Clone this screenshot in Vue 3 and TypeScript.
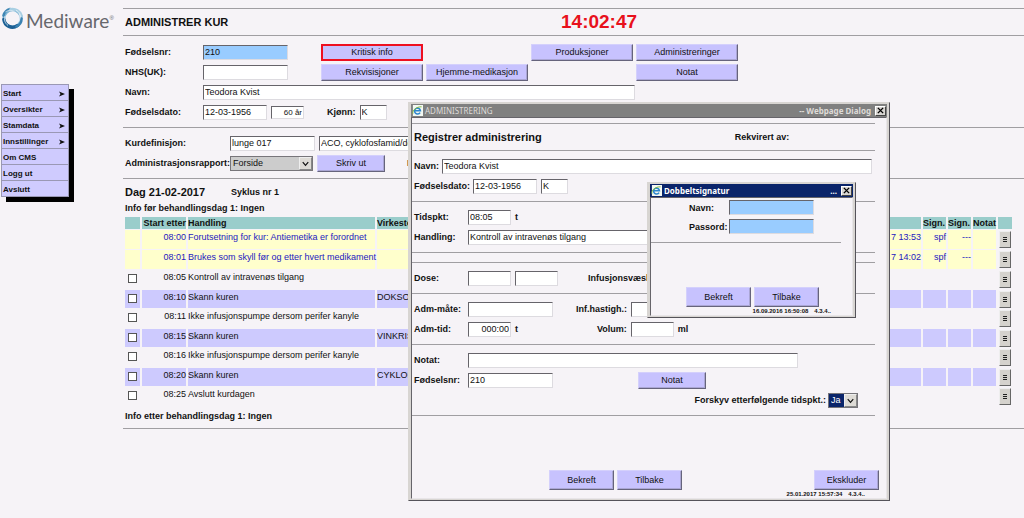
<script setup lang="ts">
import { ref } from 'vue'

interface MenuItem { label: string; sub: boolean }
interface Row {
  time: string
  action: string
  drug?: string
  date?: string
  sign?: string
  sign2?: string
  kind: 'done' | 'plain' | 'band'
}

const menu: MenuItem[] = [
  { label: 'Start', sub: true },
  { label: 'Oversikter', sub: true },
  { label: 'Stamdata', sub: true },
  { label: 'Innstillinger', sub: true },
  { label: 'Om CMS', sub: false },
  { label: 'Logg ut', sub: false },
  { label: 'Avslutt', sub: false },
]

const rows: Row[] = [
  { time: '08:00', action: 'Forutsetning for kur: Antiemetika er forordnet', date: '7 13:53', sign: 'spf', sign2: '---', kind: 'done' },
  { time: '08:01', action: 'Brukes som skyll før og etter hvert medikament', date: '7 14:02', sign: 'spf', sign2: '---', kind: 'done' },
  { time: '08:05', action: 'Kontroll av intravenøs tilgang', kind: 'plain' },
  { time: '08:10', action: 'Skann kuren', drug: 'DOKSO', kind: 'band' },
  { time: '08:11', action: 'Ikke infusjonspumpe dersom perifer kanyle', kind: 'plain' },
  { time: '08:15', action: 'Skann kuren', drug: 'VINKRIS', kind: 'band' },
  { time: '08:16', action: 'Ikke infusjonspumpe dersom perifer kanyle', kind: 'plain' },
  { time: '08:20', action: 'Skann kuren', drug: 'CYKLOF', kind: 'band' },
  { time: '08:25', action: 'Avslutt kurdagen', kind: 'plain' },
]

const birthNo = ref('210')
const nhs = ref('')
const name = ref('Teodora Kvist')
const birthDate = ref('12-03-1956')
const age = ref('60 år')
const gender = ref('K')
const cure = ref('lunge 017')
const cureText = ref('ACO, cyklofosfamid/doksorubicin')
const time = ref('08:05')
const action = ref('Kontroll av intravenøs tilgang')
const duration = ref('000:00')
</script>

<template>
  <div class="page">
    <aside class="side">
      <div class="logo">
        <svg class="ring" viewBox="0 0 24 24" aria-hidden="true">
          <g fill="none" stroke-linecap="round">
            <circle cx="12" cy="12" r="9" stroke="#7fb4d4" stroke-width="3" />
            <path d="M3 13a9 9 0 0 0 14 6.500" stroke="#1c5f94" stroke-width="3.500" />
            <path d="M2.500 9a10 10 0 0 1 7-7" stroke="#3f86b4" stroke-width="2.500" />
            <path d="M10 2.500c5-1 10 2 11.500 7" stroke="#a9cfe3" stroke-width="3" />
            <path d="M21.500 12c0 4-2 7-5.500 8.500" stroke="#3b82b2" stroke-width="2.500" />
            <path d="M5 5c3-2 7-2 9 0M19 7c1.500 3 1 7-1 9M7 19c-3-2-4-6-3-9M16 3.500c3 1.500 4.500 4 4.500 7" stroke="#e6f1f7" stroke-width="0.800" />
          </g>
        </svg>
        <span class="brand">Mediware</span><span class="reg">®</span>
      </div>
      <nav class="menu">
        <a v-for="m in menu" :key="m.label" href="#" class="menu-item">
          <span>{{ m.label }}</span>
          <svg v-if="m.sub" class="arrow" viewBox="0 0 6 6" aria-hidden="true"><path d="M0 0.500L6 3L0 5.500L1.500 3Z" fill="#111" /></svg>
        </a>
      </nav>
    </aside>

    <main class="main">
      <header class="title-row">
        <h1 class="heading title">ADMINISTRER KUR</h1>
        <span class="clock">14:02:47</span>
      </header>

      <section class="section patient">
        <div class="row">
          <label class="lab" for="m-nr">Fødselsnr:</label>
          <input id="m-nr" v-model="birthNo" class="field w-l blue">
          <div class="actions">
            <button class="btn alert">Kritisk info</button>
            <span></span>
            <button class="btn">Produksjoner</button>
            <button class="btn">Administreringer</button>
          </div>
        </div>
        <div class="row">
          <label class="lab" for="m-nhs">NHS(UK):</label>
          <input id="m-nhs" v-model="nhs" class="field w-l">
          <div class="actions">
            <button class="btn">Rekvisisjoner</button>
            <button class="btn">Hjemme-medikasjon</button>
            <span></span>
            <button class="btn">Notat</button>
          </div>
        </div>
        <div class="row">
          <label class="lab" for="m-navn">Navn:</label>
          <input id="m-navn" v-model="name" class="field w-name">
        </div>
        <div class="row">
          <label class="lab" for="m-dato">Fødselsdato:</label>
          <input id="m-dato" v-model="birthDate" class="field w-date">
          <input v-model="age" class="field w-age right" aria-label="Alder">
          <label class="lab-gender" for="m-kj">Kjønn:</label>
          <input id="m-kj" v-model="gender" class="field w-s">
        </div>
      </section>

      <section class="section">
        <div class="row">
          <label class="lab-wide" for="m-kur">Kurdefinisjon:</label>
          <input id="m-kur" v-model="cure" class="field w-l">
          <input v-model="cureText" class="field w-cure" aria-label="Kurbeskrivelse">
        </div>
        <div class="row">
          <label class="lab-wide" for="m-rap">Administrasjonsrapport:</label>
          <span class="pick pick-report">
            <select id="m-rap"><option>Forside</option></select>
            <svg viewBox="0 0 12 12" aria-hidden="true"><path d="M3 4.500L6 8L9 4.500" fill="none" stroke="#111" stroke-width="1.300" /></svg>
          </span>
          <button class="btn w-btn">Skriv ut</button>
          <span class="info-lab">I</span>
        </div>
      </section>

      <section class="section plan">
        <div class="day"><h2 class="heading">Dag 21-02-2017</h2><strong>Syklus nr 1</strong></div>
        <div class="info">Info før behandlingsdag 1: Ingen</div>
        <table class="table">
          <colgroup>
            <col class="c-check"><col class="c-time"><col class="c-action"><col><col class="c-date">
            <col class="c-sign"><col class="c-sign"><col class="c-sign"><col class="c-more">
          </colgroup>
          <thead>
            <tr><th></th><th class="right">Start etter</th><th>Handling</th><th>Virkesto</th><th></th><th>Sign.</th><th>Sign.</th><th>Notat</th><th></th></tr>
          </thead>
          <tbody>
            <tr v-for="r in rows" :key="r.time" :class="r.kind">
              <td><input v-if="r.kind !== 'done'" type="checkbox" class="check" :aria-label="r.time"></td>
              <td class="right">{{ r.time }}</td>
              <td>{{ r.action }}</td>
              <td>{{ r.drug }}</td>
              <td class="right">{{ r.date }}</td>
              <td class="right">{{ r.sign }}</td>
              <td class="right">{{ r.sign2 }}</td>
              <td></td>
              <td class="more-cell">
                <button class="more" :aria-label="'Meny ' + r.time">
                  <svg viewBox="0 0 6 7" aria-hidden="true"><path d="M1 1.500H5M1 3.500H5M1 5.500H5" stroke="#222" stroke-width="1" /></svg>
                </button>
              </td>
            </tr>
          </tbody>
        </table>
        <div class="info after">Info etter behandlingsdag 1: Ingen</div>
      </section>
      <div class="section"></div>
    </main>

    <div class="window admin" role="dialog" aria-label="Administrering">
      <div class="bar">
        <svg class="ie" viewBox="0 0 12 12" aria-hidden="true">
          <rect x="1" y="0" width="11" height="12" fill="#f4f8f2" />
          <path d="M8.800 8.200A3.200 3.200 0 1 1 9.200 6.300H3.500" fill="none" stroke="#2c86cf" stroke-width="1.700" />
          <path d="M1 9.500C0 6 5 1.500 10.500 2" fill="none" stroke="#7dbb3c" stroke-width="1" />
        </svg>
        <span class="bar-name">ADMINISTRERING</span>
        <strong>-- Webpage Dialog</strong>
        <button class="close" aria-label="Lukk"><svg viewBox="0 0 8 8" aria-hidden="true"><path d="M1 1L7 7M7 1L1 7" stroke="#000" stroke-width="1.600" /></svg></button>
      </div>
      <div class="body">
        <div class="title-row dialog-title">
          <h2 class="heading">Registrer administrering</h2>
          <strong class="req">Rekvirert av:</strong>
        </div>
        <section class="section">
          <div class="row">
            <label class="auto" for="d-navn">Navn:</label>
            <input id="d-navn" v-model="name" class="field grow">
          </div>
          <div class="row">
            <label class="auto" for="d-dato">Fødselsdato:</label>
            <input id="d-dato" v-model="birthDate" class="field w-date">
            <input v-model="gender" class="field w-s" aria-label="Kjønn">
          </div>
        </section>
        <section class="section">
          <div class="row">
            <label class="lab-d" for="d-tid">Tidspkt:</label>
            <input id="d-tid" v-model="time" class="field w-m"><strong>t</strong>
          </div>
          <div class="row">
            <label class="lab-d" for="d-hand">Handling:</label>
            <input id="d-hand" v-model="action" class="field w-long">
          </div>
        </section>
        <div class="section spacer"></div>
        <section class="section">
          <div class="row">
            <label class="lab-d" for="d-dose">Dose:</label>
            <input id="d-dose" class="field w-m">
            <input class="field w-m" aria-label="Enhet">
            <label class="lab-fluid" for="d-fluid">Infusjonsvæske:</label>
            <input id="d-fluid" class="field w-l">
          </div>
        </section>
        <section class="section">
          <div class="row">
            <label class="lab-d" for="d-mate">Adm-måte:</label>
            <input id="d-mate" class="field w-l">
            <label class="lab-mid" for="d-hast">Inf.hastigh.:</label>
            <input id="d-hast" class="field w-m">
          </div>
          <div class="row">
            <label class="lab-d" for="d-adm">Adm-tid:</label>
            <input id="d-adm" v-model="duration" class="field w-m right"><strong>t</strong>
            <label class="lab-vol" for="d-vol">Volum:</label>
            <input id="d-vol" class="field w-m"><strong>ml</strong>
          </div>
        </section>
        <section class="section">
          <div class="row">
            <label class="lab-d" for="d-not">Notat:</label>
            <input id="d-not" class="field w-long">
          </div>
          <div class="row">
            <label class="lab-d" for="d-nr">Fødselsnr:</label>
            <input id="d-nr" v-model="birthNo" class="field w-l">
            <button class="btn w-btn note">Notat</button>
          </div>
          <div class="row shift">
            <label for="d-skyv">Forskyv etterfølgende tidspkt.:</label>
            <span class="pick pick-yes">
              <select id="d-skyv"><option>Ja</option></select>
              <svg viewBox="0 0 12 12" aria-hidden="true"><path d="M3 4.500L6 8L9 4.500" fill="none" stroke="#111" stroke-width="1.300" /></svg>
            </span>
          </div>
        </section>
        <div class="section"></div>
        <footer class="foot">
          <button class="btn big">Bekreft</button>
          <button class="btn big">Tilbake</button>
          <button class="btn big last">Ekskluder</button>
        </footer>
        <div class="stamp"><span>25.01.2017 15:57:34</span><span>4.3.4..</span></div>
      </div>
    </div>

    <div class="window sign" role="dialog" aria-label="Dobbeltsignatur">
      <div class="bar active">
        <svg class="ie" viewBox="0 0 12 12" aria-hidden="true">
          <rect x="1" y="0" width="11" height="12" fill="#f4f8f2" />
          <path d="M8.800 8.200A3.200 3.200 0 1 1 9.200 6.300H3.500" fill="none" stroke="#2c86cf" stroke-width="1.700" />
          <path d="M1 9.500C0 6 5 1.500 10.500 2" fill="none" stroke="#7dbb3c" stroke-width="1" />
        </svg>
        <strong class="bar-name">Dobbeltsignatur</strong>
        <strong>...</strong>
        <button class="close" aria-label="Lukk"><svg viewBox="0 0 8 8" aria-hidden="true"><path d="M1 1L7 7M7 1L1 7" stroke="#000" stroke-width="1.600" /></svg></button>
      </div>
      <div class="body">
        <div class="login">
          <label for="s-navn">Navn:</label>
          <input id="s-navn" class="field w-l blue">
          <label for="s-pass">Passord:</label>
          <input id="s-pass" type="password" class="field w-l blue">
        </div>
        <div class="section"></div>
        <footer class="foot">
          <button class="btn big">Bekreft</button>
          <button class="btn big">Tilbake</button>
        </footer>
        <div class="stamp"><span>16.09.2016 16:50:08</span><span>4.3.4..</span></div>
      </div>
    </div>
  </div>
</template>

<style>
html, body { background: #f6f3f7; }
</style>

<style scoped>
.page {
  position: relative;
  display: flex;
  min-height: 100vh;
  overflow: hidden;
  background: #f6f3f7;
  color: #111;
  font: 9px/12px "Liberation Sans", Arial, sans-serif;
}
.page *, .page *::before { box-sizing: border-box; }
input, button, select { margin: 0; font: inherit; color: inherit; border-radius: 0; }
label, strong, .info { font-weight: bold; white-space: nowrap; }

.side { flex: 0 0 123px; }
.logo { display: flex; align-items: center; height: 42px; padding-left: 1px; color: #66676c; }
.ring { width: 23px; height: 23px; margin: 0 2px 5px 0; }
.brand { font: 19px/24px Lato, "Open Sans", sans-serif; }
.reg { font-size: 6px; margin-bottom: 6px; }
.menu {
  width: 68px;
  margin: 42px 0 0 1px;
  border: 1px solid #9a98b4;
  border-bottom: 0;
  background: #cfcbfe;
  box-shadow: 5px 5px 0 #000;
}
.menu-item {
  display: flex;
  align-items: center;
  justify-content: space-between;
  height: 16px;
  padding: 2px 3px 0 1px;
  border-bottom: 1px solid #9a98b4;
  color: #111;
  font-size: 8px;
  font-weight: bold;
  text-decoration: none;
}
.arrow { width: 6px; height: 6px; }

.main { flex: 1; min-width: 0; padding-top: 8px; }
.title-row {
  display: flex;
  align-items: center;
  height: 27px;
  padding-left: 2px;
  border-top: 1px solid #a09ea2;
}
.heading { margin: 0; font-size: 11px; line-height: 16px; white-space: nowrap; }
.title { width: 436px; }
.clock { color: #e8101c; font-size: 19px; font-weight: bold; line-height: 24px; }
.section { border-top: 1px solid #a09ea2; }
.section:not(:empty) { padding: 5px 0 5px 2px; }
.section.patient { padding-top: 6px; }
.row { display: flex; align-items: center; gap: 4px; height: 20px; }
.lab { width: 74px; }
.lab-wide { width: 101px; }
.lab-gender { margin-left: 19px; }

.field {
  height: 15px;
  padding: 0 1px;
  border: 1px solid;
  border-color: #66646a #dddbe0 #dddbe0 #66646a;
  background: #fff;
  outline: 0;
}
.field.blue { background: #99ccff; }
.right { text-align: right; }
.w-l { width: 85px; }
.w-m { width: 43px; }
.w-s { width: 27px; }
.w-date { width: 64px; }
.w-age { width: 33px; font-size: 8px; height: 13px; }
.w-name { width: 432px; }
.w-cure { width: 320px; }
.w-long { width: 330px; }
.grow { flex: 1; margin-right: 3px; }

.actions { display: grid; grid-template-columns: repeat(4, 102px); gap: 3px; margin-left: 29px; }
.btn {
  height: 17px;
  padding: 0;
  border: 1px solid;
  border-color: #d4d0fc #66647c #66647c #d4d0fc;
  box-shadow: inset -1px -1px 0 #aaa6d4;
  background: #c7c2fe;
  white-space: nowrap;
}
.btn.alert { border: 2px solid #ee1020; box-shadow: none; }
.w-btn { width: 68px; }
.info-lab { margin-left: 18px; font-weight: bold; }

.pick { position: relative; display: inline-flex; height: 15px; border: 1px solid #77757a; }
.pick select { width: 100%; padding: 0 2px; border: 0; appearance: none; background: #ccc; outline: 0; }
.pick svg {
  position: absolute;
  top: 0;
  right: 0;
  width: 13px;
  height: 13px;
  background: #dedbd6;
  border: 1px solid;
  border-color: #eee #888 #888 #eee;
  pointer-events: none;
}
.pick-report { width: 83px; }
.pick-yes { width: 30px; }
.pick-yes select { background: #0a246a; color: #fff; }

.day { display: flex; align-items: center; height: 16px; }
.day .heading { width: 106px; }
.info { height: 16px; line-height: 16px; }
.info.after { height: 18px; line-height: 18px; }
.plan .table { width: calc(100% - 8px); margin-left: -2px; table-layout: fixed; border-collapse: separate; border-spacing: 2px 1px; }
.section.plan { padding-bottom: 3px; }
.c-check { width: 15px; }
.c-time { width: 44px; }
.c-action { width: 187px; }
.c-date { width: 80px; }
.c-sign { width: 23px; }
.c-more { width: 14px; }
.table th, .table td { padding: 0; white-space: nowrap; text-align: left; vertical-align: top; line-height: 15px; }
.table th { height: 12px; line-height: 12px; background: #9acdcb; }
.table th.right, .table td.right { text-align: right; }
.table td { height: 19px; }
.band td { height: 18px; background: #cdcafe; }
.done td { background: #ffffcc; color: #2418c0; }
.table td.more-cell { background: none; }
.check {
  display: block;
  width: 9px;
  height: 9px;
  margin: 4px 0 0 3px;
  appearance: none;
  border: 1px solid #555;
  background: #fff;
}
.more {
  display: flex;
  align-items: center;
  justify-content: center;
  width: 12px;
  height: 17px;
  margin: 1px 0 0 1px;
  padding: 0;
  border: 1px solid;
  border-color: #eee #666 #666 #eee;
  background: #d5d2cd;
}
.more svg { width: 6px; height: 7px; }

.window {
  position: absolute;
  display: flex;
  flex-direction: column;
  padding: 1px;
  border: 1px solid;
  border-color: #d8d5d2 #55535a #55535a #d8d5d2;
  background: #d8d5d2;
}
.admin { top: 102px; left: 408px; width: 482px; height: 399px; }
.sign { top: 182px; left: 647px; width: 209px; height: 136px; }
.bar {
  display: flex;
  align-items: center;
  height: 13px;
  margin: 0 1px;
  padding: 0 1px;
  gap: 2px;
  background: #808080;
  color: #dedbd8;
  font: 8px/12px "Noto Sans", "Open Sans", sans-serif;
}
.bar.active { background: #0a246a; color: #fff; }
.bar-name { flex: 1; }
.ie { width: 11px; height: 11px; }
.close {
  display: flex;
  align-items: center;
  justify-content: center;
  width: 11px;
  height: 10px;
  margin-left: 2px;
  padding: 0;
  border: 1px solid;
  border-color: #fff #444 #444 #fff;
  background: #d8d5d2;
}
.close svg { width: 7px; height: 7px; }
.body {
  flex: 1;
  display: flex;
  flex-direction: column;
  margin: 0 1px;
  border: 1px solid;
  border-color: #66646a #e8e5e8 #e8e5e8 #66646a;
  background: #f6f3f7;
}
.body > .section, .body > .title-row { margin-right: 11px; }
.dialog-title { margin-top: 5px; }
.req { margin-left: 193px; }
.auto { margin-right: -1px; }
.lab-d { width: 50px; }
.body .spacer { height: 10px; }
.lab-fluid { margin-left: 26px; }
.lab-mid { margin-left: 19px; }
.lab-vol { margin-left: 75px; }
.note { margin-left: 81px; }
.shift { justify-content: flex-end; padding-right: 17px; gap: 2px; }
.foot { display: flex; gap: 3px; margin-top: auto; padding-left: 137px; padding-right: 7px; }
.sign .foot { padding-left: 35px; }
.big { width: 65px; height: 20px; }
.last { margin-left: auto; }
.stamp { display: flex; justify-content: flex-end; gap: 6px; padding-right: 21px; font-size: 6px; font-weight: bold; line-height: 8px; }
.login {
  display: grid;
  grid-template-columns: 40px 85px;
  grid-auto-rows: 19px;
  align-items: center;
  padding: 0 0 6px 38px;
}
</style>
